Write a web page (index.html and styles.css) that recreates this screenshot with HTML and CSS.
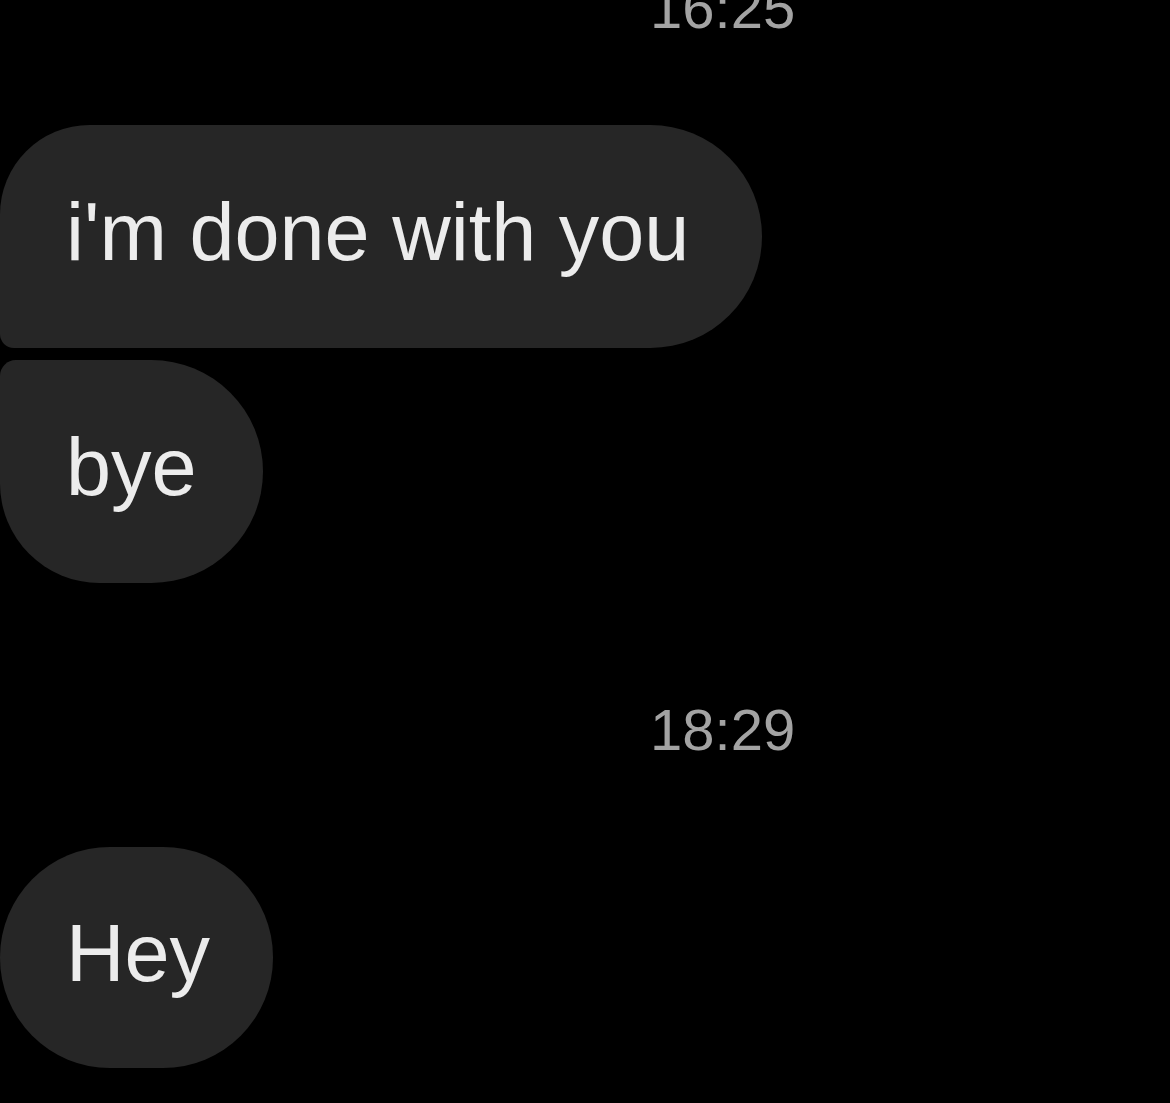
FILE: index.html
```html
<!DOCTYPE html>
<html lang="en">
<head>
<meta charset="utf-8">
<title>Chat</title>
<link rel="stylesheet" href="styles.css">
</head>
<body>
<main class="chat">
  <div class="stamp stamp-top">16:25</div>
  <div class="bubble bubble-first">i'm done with you</div>
  <div class="bubble bubble-last">bye</div>
  <div class="stamp stamp-mid">18:29</div>
  <div class="bubble bubble-single">Hey</div>
</main>
</body>
</html>
```
FILE: styles.css
```css
html, body {
  margin: 0;
  padding: 0;
  background: #000;
}
body {
  width: 1170px;
  height: 1103px;
  overflow: hidden;
  font-family: "Liberation Sans", Arial, sans-serif;
}
.chat {
  display: flex;
  flex-direction: column;
  align-items: flex-start;
}
.stamp {
  font-size: 58px;
  line-height: 58px;
  color: #a3a3a3;
  padding-left: 650px;
}
.stamp-top {
  margin-top: -21px;
}
.stamp-mid {
  margin-top: 118px;
}
.bubble {
  background: #262626;
  color: #ececec;
  font-size: 81px;
  line-height: 96px;
  padding: 59px 73px 68px 66px;
  white-space: nowrap;
}
.bubble-first {
  margin-top: 88px;
  border-radius: 90px 112px 112px 14px;
}
.bubble-last {
  margin-top: 12px;
  padding-right: 66px;
  border-radius: 16px 112px 112px 100px;
}
.bubble-single {
  margin-top: 88px;
  padding: 58px 63px 67px 66px;
  border-radius: 110px;
}
```
